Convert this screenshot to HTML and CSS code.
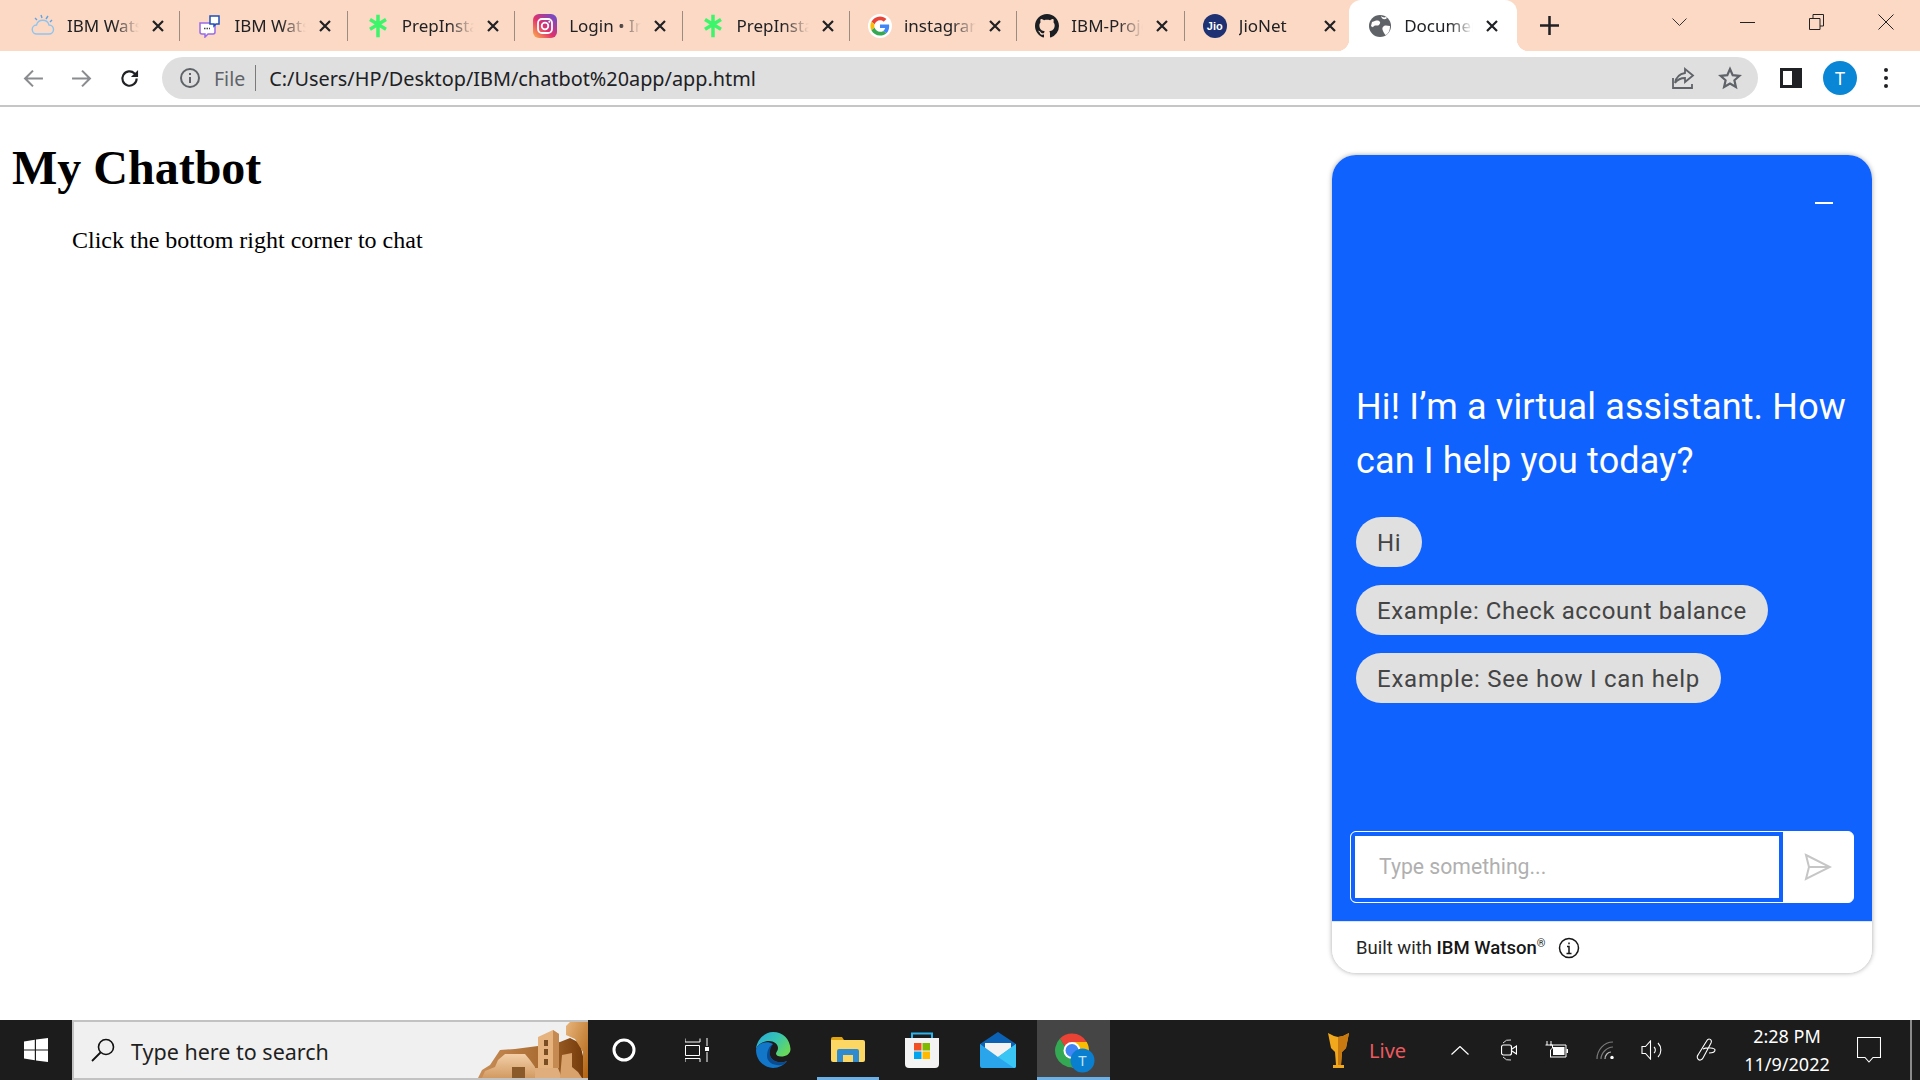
FILE: index.html
```html
<!DOCTYPE html>
<html lang="en">
<head>
    <meta charset="UTF-8">
    <title>Document</title>
    <link rel="stylesheet" href="styles.css">
</head>
<body>
    <svg class="defs" width="0" height="0">
        <symbol id="x" viewBox="0 0 14 14"><path d="M2 2l10 10M12 2L2 12" fill="none" stroke="#202124" stroke-width="2.2"/></symbol>
        <symbol id="prep" viewBox="0 0 24 30"><path d="M12 1v28M2 7l20 12M22 7L2 19" fill="none" stroke="#3df56b" stroke-width="4.4"/></symbol>
    </svg>

    <div class="tabstrip">
        <div class="tab">
            <svg class="favicon" viewBox="0 0 24 24"><path d="M6 20a4.500 4.500 0 0 1-.5-9 6.500 6.500 0 0 1 12.500 0 4.500 4.500 0 0 1 0 9z" fill="none" stroke="#8fc4ee" stroke-width="1.400"/><path d="M10 1l1 3M4 4l2 2M17 2l-2 3M21 6l-2 2" stroke="#5ea4e8" stroke-width="1.400"/></svg>
            <span class="tab-title">IBM Watson</span>
            <svg class="tab-close"><use href="#x"/></svg>
        </div>
        <div class="tab-sep"></div>
        <div class="tab">
            <svg class="favicon" viewBox="0 0 24 24"><path d="M2 9h13a2 2 0 0 1 2 2v7a2 2 0 0 1-2 2h-5l-3 3v-3H4a2 2 0 0 1-2-2z" fill="#fff" stroke="#9a6be8" stroke-width="1.500"/><path d="M12 2h9v8h-3l-2 2v-2h-4z" fill="#fff" stroke="#1f4fb8" stroke-width="1.500"/><path d="M6 14.500h6" stroke="#444" stroke-width="1.400" stroke-dasharray="1.500 1"/></svg>
            <span class="tab-title">IBM Watson</span>
            <svg class="tab-close"><use href="#x"/></svg>
        </div>
        <div class="tab-sep"></div>
        <div class="tab">
            <svg class="favicon"><use href="#prep"/></svg>
            <span class="tab-title">PrepInsta</span>
            <svg class="tab-close"><use href="#x"/></svg>
        </div>
        <div class="tab-sep"></div>
        <div class="tab">
            <svg class="favicon" viewBox="0 0 24 24">
                <defs><linearGradient id="ig" x1="0" y1="1" x2="1" y2="0"><stop offset="0" stop-color="#fdb44b"/><stop offset=".45" stop-color="#e1306c"/><stop offset="1" stop-color="#5b51d8"/></linearGradient></defs>
                <rect width="24" height="24" rx="6" fill="url(#ig)"/><rect x="5" y="5" width="14" height="14" rx="4" fill="none" stroke="#fff" stroke-width="1.800"/><circle cx="12" cy="12" r="3.300" fill="none" stroke="#fff" stroke-width="1.800"/><circle cx="16.300" cy="7.700" r="1" fill="#fff"/>
            </svg>
            <span class="tab-title">Login • Instagram</span>
            <svg class="tab-close"><use href="#x"/></svg>
        </div>
        <div class="tab-sep"></div>
        <div class="tab">
            <svg class="favicon"><use href="#prep"/></svg>
            <span class="tab-title">PrepInsta</span>
            <svg class="tab-close"><use href="#x"/></svg>
        </div>
        <div class="tab-sep"></div>
        <div class="tab">
            <svg class="favicon" viewBox="-6 -6 60 60">
                <circle cx="24" cy="24" r="30" fill="#fff"/>
                <path fill="#EA4335" d="M24 9.500c3.540 0 6.710 1.220 9.210 3.600l6.850-6.850C35.900 2.380 30.470 0 24 0 14.620 0 6.510 5.380 2.560 13.220l7.980 6.190C12.430 13.720 17.740 9.500 24 9.500z"/>
                <path fill="#4285F4" d="M46.980 24.550c0-1.570-.15-3.090-.38-4.550H24v9.020h12.940c-.58 2.960-2.260 5.480-4.780 7.180l7.730 6c4.510-4.180 7.090-10.360 7.090-17.650z"/>
                <path fill="#FBBC05" d="M10.530 28.590c-.48-1.450-.76-2.990-.76-4.590s.27-3.140.76-4.590l-7.980-6.190C.92 16.460 0 20.120 0 24c0 3.880.92 7.540 2.560 10.780l7.970-6.190z"/>
                <path fill="#34A853" d="M24 48c6.480 0 11.930-2.130 15.890-5.810l-7.730-6c-2.150 1.450-4.920 2.300-8.160 2.300-6.260 0-11.570-4.220-13.470-9.910l-7.980 6.190C6.510 42.620 14.620 48 24 48z"/>
            </svg>
            <span class="tab-title">instagram</span>
            <svg class="tab-close"><use href="#x"/></svg>
        </div>
        <div class="tab-sep"></div>
        <div class="tab">
            <svg class="favicon" viewBox="0 0 16 16"><path fill="#1b1f23" d="M8 0C3.580 0 0 3.580 0 8c0 3.540 2.290 6.530 5.470 7.590.4.070.55-.17.55-.38 0-.19-.01-.82-.01-1.490-2.010.37-2.530-.49-2.690-.94-.09-.23-.48-.94-.82-1.130-.28-.15-.68-.52-.01-.53.63-.01 1.080.58 1.230.82.720 1.210 1.870.87 2.330.66.070-.52.280-.87.510-1.070-1.780-.2-3.640-.89-3.640-3.950 0-.87.310-1.590.820-2.150-.08-.2-.36-1.020.080-2.120 0 0 .67-.21 2.200.82.640-.18 1.320-.27 2-.27.680 0 1.360.090 2 .27 1.530-1.040 2.200-.82 2.200-.82.440 1.100.160 1.920.080 2.120.510.560.820 1.270.820 2.150 0 3.070-1.870 3.750-3.650 3.950.290.250.540.730.540 1.480 0 1.070-.01 1.930-.01 2.200 0 .21.150.46.550.38A8.013 8.013 0 0 0 16 8c0-4.420-3.580-8-8-8z"/></svg>
            <span class="tab-title">IBM-Project</span>
            <svg class="tab-close"><use href="#x"/></svg>
        </div>
        <div class="tab-sep"></div>
        <div class="tab tab-last">
            <span class="jio-icon">Jio</span>
            <span class="tab-title">JioNet</span>
            <svg class="tab-close"><use href="#x"/></svg>
        </div>
        <div class="tab tab-active">
            <svg class="favicon" viewBox="0 0 24 24"><circle cx="12" cy="12" r="11" fill="#5f6368"/><path d="M4 8c3-1 5-2 7-1s1 3 0 4-4 0-5 1-1 2-3 0zM22 12c-2 0-4-1-6 0s-2 3-1 5 2 4 3 4c3-2 4-5 4-9zM13 2c1 1 3 2 5 1l1 1c-2 2-5 2-6-2z" fill="#fff"/></svg>
            <span class="tab-title">Document</span>
            <svg class="tab-close"><use href="#x"/></svg>
        </div>
        <svg class="new-tab" viewBox="0 0 18 18"><path d="M9 0v18M0 9h18" stroke="#202124" stroke-width="2.400"/></svg>
        <div class="window-controls">
            <svg class="win-chevron" viewBox="0 0 15 8"><path d="M.5.5l7 7 7-7" fill="none" stroke="#333" stroke-width="1"/></svg>
            <svg class="win-min" viewBox="0 0 15 1"><path d="M0 .5h15" stroke="#222" stroke-width="1"/></svg>
            <svg class="win-restore" viewBox="0 0 15 16"><path d="M.5 4.500h10.500v11H.5zM4 4.500V.5h10.500V12H11" fill="none" stroke="#222" stroke-width="1"/></svg>
            <svg class="win-close" viewBox="0 0 16 16"><path d="M.5.5l15 15M15.500.5l-15 15" fill="none" stroke="#222" stroke-width="1"/></svg>
        </div>
    </div>

    <div class="toolbar">
        <svg class="nav-btn" viewBox="0 0 20 20"><path d="M19 10H2M9.500 2.500L2 10l7.500 7.500" fill="none" stroke="#8a8c8f" stroke-width="2"/></svg>
        <svg class="nav-btn" viewBox="0 0 20 20"><path d="M1 10h17M10.500 2.500L18 10l-7.500 7.500" fill="none" stroke="#8a8c8f" stroke-width="2"/></svg>
        <svg class="nav-btn" viewBox="0 0 22 22"><path d="M18.500 11a7.500 7.500 0 1 1-2.200-5.300L19 8.200" fill="none" stroke="#202124" stroke-width="2.200"/><path d="M20 2v7.500h-7.500z" fill="#202124"/></svg>
        <div class="address-bar">
            <svg class="info-icon" viewBox="0 0 22 22"><circle cx="11" cy="11" r="9" fill="none" stroke="#5f6368" stroke-width="2"/><path d="M11 10v6M11 6v2" stroke="#5f6368" stroke-width="2"/></svg>
            <span class="addr-file">File</span>
            <span class="addr-sep"></span>
            <span class="addr-url">C:/Users/HP/Desktop/IBM/chatbot%20app/app.html</span>
            <svg class="addr-share" viewBox="0 0 24 24"><path d="M2 12v10h19v-4" fill="none" stroke="#5f6368" stroke-width="1.800"/><path d="M14 3l8 6.500-8 6.500v-4c-4 0-7 1-10 5 1-6 4-9 10-10z" fill="none" stroke="#5f6368" stroke-width="1.800"/></svg>
            <svg class="addr-star" viewBox="0 0 24 24"><path d="M12 3l2.700 6.200 6.800.6-5.100 4.500 1.500 6.700-5.900-3.500L6.100 21l1.500-6.700L2.500 9.800l6.800-.6z" fill="none" stroke="#5f6368" stroke-width="2.200"/></svg>
        </div>
        <svg class="side-panel" viewBox="0 0 22 20"><path d="M0 0h22v20H0z" fill="#202124"/><path d="M3 3h9v14H3z" fill="#fff"/></svg>
        <div class="avatar">T</div>
        <div class="menu-dots"><i></i><i></i><i></i></div>
    </div>

    <div class="page">
        <h1>My Chatbot</h1>
        <p>Click the bottom right corner to chat</p>

        <div class="chat-panel">
            <div class="chat-blue">
                <div class="chat-header"><span class="chat-min"></span></div>
                <div class="chat-greeting">Hi! I’m a virtual assistant. How can I help you today?</div>
                <div class="chips">
                    <button class="chip">Hi</button>
                    <button class="chip">Example: Check account balance</button>
                    <button class="chip chip-wide">Example: See how I can help</button>
                </div>
                <div class="chat-input-row">
                    <div class="chat-input">Type something...</div>
                    <div class="chat-send">
                        <svg viewBox="0 0 28 28"><path d="M2 2l24 12L2 26l3-12zM5 14h21" fill="none" stroke="#c6c6c6" stroke-width="2"/></svg>
                    </div>
                </div>
            </div>
            <div class="chat-footer">
                <span>Built with <b>IBM Watson</b><sup>®</sup></span>
                <svg viewBox="0 0 22 22"><circle cx="11" cy="11" r="9.500" fill="none" stroke="#161616" stroke-width="1.500"/><path d="M8.500 16.500h5M11 16.500V9.500H9M11 5.500v1.800" fill="none" stroke="#161616" stroke-width="1.500"/></svg>
            </div>
        </div>
    </div>

    <div class="taskbar">
        <svg class="start" viewBox="0 0 24 24"><path d="M0 3.500l10.800-1.700v9.600H0zM12 1.600L24 0v11.400H12zM0 12.600h10.800v9.600L0 20.500zM12 12.600h12V24l-12-1.600z" fill="#fff"/></svg>
        <div class="search">
            <svg class="search-icon" viewBox="0 0 24 24"><circle cx="15" cy="9" r="7.500" fill="none" stroke="#111" stroke-width="1.600"/><path d="M9.500 14.500L1 23" stroke="#111" stroke-width="1.800"/></svg>
            <span>Type here to search</span>
            <svg class="search-art" viewBox="0 0 118 56">
                <defs>
                    <linearGradient id="rock" x1="0" y1="0" x2="1" y2="0"><stop offset="0" stop-color="#c98f58"/><stop offset=".6" stop-color="#a86a30"/><stop offset="1" stop-color="#6e3506"/></linearGradient>
                    <linearGradient id="cliff" x1="0" y1="0" x2="1" y2="1"><stop offset="0" stop-color="#e8b57c"/><stop offset="1" stop-color="#b0620f"/></linearGradient>
                    <linearGradient id="adobe" x1="0" y1="0" x2="0" y2="1"><stop offset="0" stop-color="#f3cfa8"/><stop offset="1" stop-color="#d29a62"/></linearGradient>
                </defs>
                <path d="M8 56l4-8 8-5 10-15 15-1 23-3 22-4 10-4 10 5 8 35z" fill="url(#rock)"/>
                <path d="M100 0h18v56h-5V30l-8-13-9-4v-9z" fill="url(#cliff)"/>
                <path d="M68 15l15-7 6 4v34H68z" fill="#e6b27e"/>
                <path d="M83 8l6 4v34h-6z" fill="#c48a52"/>
                <path d="M74 18h4v6h-4zM74 27h4v6h-4zM74 37h4v6h-4z" fill="#7b4d22"/>
                <path d="M12 56l3-7 10-4 3-7 7-6h20l5 6 5 7v11z" fill="url(#adobe)"/>
                <path d="M42 45h13v11H42z" fill="#8a5a2a"/>
                <path d="M65 46h23l4 10H65z" fill="#dfae7c"/>
                <path d="M92 33l10-2v14l6 5 4 6H90z" fill="#d9a16b"/>
            </svg>
        </div>
        <div class="tb-item tb-cortana">
            <svg class="ic-24" viewBox="0 0 24 24"><circle cx="12" cy="12" r="10" fill="none" stroke="#fff" stroke-width="3"/></svg>
        </div>
        <div class="tb-item tb-taskview">
            <svg class="ic-24" viewBox="0 0 24 24"><path d="M0 .5v3.500h15V.5M.5 7.500h14v10H.5zM0 24v-3.500h15V24M22 0v8M22 14v10" fill="none" stroke="#fff"/><path d="M20 9h4v4h-4z" fill="#fff"/></svg>
        </div>
        <div class="tb-item">
            <svg class="ic-36" viewBox="0 0 36 36">
                <defs><linearGradient id="edge" x1="0" y1="0" x2="1" y2=".6"><stop offset="0" stop-color="#2aa6dc"/><stop offset=".55" stop-color="#35c5b4"/><stop offset="1" stop-color="#66d85c"/></linearGradient></defs>
                <path d="M1 17C2 7 10 0 18 0c10 0 17 7 17.500 17 0 5-4.500 7.500-9.500 7.500-3 0-5-1-5-3 0-1.500 2-2.500 2-5.500 0-4-4-7-9-7-6 0-11 3-13 8z" fill="url(#edge)"/>
                <path d="M1 18c0 10 8 18 17 18 6 0 11-3 14-7-4 2-10 2-14-1-5-4-5-12 0-16C12 8 2 11 1 18z" fill="#1277c9"/>
                <path d="M12 24c0 7 8 10 14 9 3-.5 5-2 6-4-4 2-11 2-15-2-3-3-3-10 1-15-4 2-6 7-6 12z" fill="#0c4a8e"/>
            </svg>
        </div>
        <div class="tb-item tb-open">
            <svg class="ic-folder" viewBox="0 0 34 26"><path d="M0 3a2 2 0 0 1 2-2h9l2 3h-13z" fill="#e0a40f"/><path d="M0 4h32a2 2 0 0 1 2 2v18a2 2 0 0 1-2 2H2a2 2 0 0 1-2-2z" fill="#fdd764"/><path d="M6 26V15a2 2 0 0 1 2-2h18a2 2 0 0 1 2 2v11h-6v-7H12v7z" fill="#2f8ad0"/></svg>
        </div>
        <div class="tb-item">
            <svg class="ic-36" viewBox="0 0 36 36">
                <path d="M8 7V1.500h20V7" fill="none" stroke="#2bb5ef" stroke-width="2"/>
                <path d="M1 6h34v26a4 4 0 0 1-4 4H5a4 4 0 0 1-4-4z" fill="#f3f3f3"/>
                <path d="M10 11h7.500v7.500H10z" fill="#f25022"/><path d="M18.500 11H26v7.500h-7.500z" fill="#7fba00"/><path d="M10 19.500h7.500V27H10z" fill="#00a4ef"/><path d="M18.500 19.500H26V27h-7.500z" fill="#ffb900"/>
            </svg>
        </div>
        <div class="tb-item tb-mail">
            <svg class="ic-36" viewBox="0 0 36 36">
                <path d="M0 12L18 0l18 12v22H0z" fill="#0b62b5"/>
                <path d="M5 11h26v8L18 26 5 19z" fill="#f2f2f2"/>
                <path d="M0 12l18 13 18-13v22a2 2 0 0 1-2 2H2a2 2 0 0 1-2-2z" fill="#2aa4ea"/>
                <path d="M36 12v22a2 2 0 0 1-2 2L18 25z" fill="#3ac6f5"/>
            </svg>
        </div>
        <div class="tb-item tb-active">
            <svg class="ic-chrome" viewBox="0 0 42 48">
                <path d="M18 8.500A17 17 0 0 1 32.700 17H18l-7.400 4.300L6 13.500A17 17 0 0 1 18 8.500z" fill="#ea4335"/>
                <path d="M32.700 17A17 17 0 0 1 18 42.500L26 29l-8-12z" fill="#fbbc05"/>
                <path d="M6 13.500A17 17 0 0 0 18 42.500L25 30l-14.400-8.700z" fill="#34a853"/>
                <circle cx="18" cy="25.500" r="8.500" fill="#fff"/><circle cx="18" cy="25.500" r="6.500" fill="#4285f4"/>
                <circle cx="28.500" cy="35.500" r="12" fill="#0a7fd0"/>
                <text x="28.500" y="41" class="chrome-t">T</text>
            </svg>
        </div>
        <div class="tray">
            <svg class="tray-torch" viewBox="0 0 21 36"><path d="M0 1l6 3 4 1 5-1 6-3-3 15-4 4-1 13h3v3H5v-3h3L7 20l-4-4z" fill="#f2a81d"/><path d="M10 5l5-1 6-3-3 15-4 4-1 13h-3z" fill="#c87a10"/></svg>
            <span class="tray-live">Live</span>
            <svg class="tray-chevron" viewBox="0 0 18 9"><path d="M.5 8.500l8.500-8 8.500 8" fill="none" stroke="#fff" stroke-width="1.200"/></svg>
            <svg class="tray-meet" viewBox="0 0 16 22"><path d="M2 4a8 8 0 0 1 8-3M2 18a8 8 0 0 0 8 3" fill="none" stroke="#ddd"/><rect x=".5" y="6" width="10" height="10" rx="2" fill="none" stroke="#fff" stroke-width="1.200"/><path d="M11 10l4.500-3v8L11 12" fill="none" stroke="#fff" stroke-width="1.200"/></svg>
            <svg class="tray-battery" viewBox="0 0 24 18"><path d="M3 0v4M7 0v4M1.500 4h7v3l-2 2v7" fill="none" stroke="#fff"/><path d="M6 4h16v12H6" fill="none" stroke="#fff"/><path d="M9 6h11.500v8H9z" fill="#fff"/><path d="M22.500 8H24v4h-1.500z" fill="#fff"/></svg>
            <svg class="tray-wifi" viewBox="0 0 18 18"><path d="M1 18C1 9 8 1 17 1M5 18c0-6 6-12 12-12" fill="none" stroke="#7b7b7b" stroke-width="1.200"/><path d="M9 18c0-4 3-7 6-7" fill="none" stroke="#b8b8b8" stroke-width="1.200"/><circle cx="16" cy="16.500" r="1.700" fill="#fff"/></svg>
            <svg class="tray-volume" viewBox="0 0 22 20"><path d="M1 6.500h3.500L9.500 1v18l-5-5.500H1z" fill="none" stroke="#fff" stroke-width="1.100"/><path d="M13 7a4 4 0 0 1 0 6M17 3a10 10 0 0 1 0 14" fill="none" stroke="#fff" stroke-width="1.100"/></svg>
            <svg class="tray-pen" viewBox="0 0 20 24"><path d="M13 1c2 0 3 2 2 4L7 20c-1 2-4 3-5 1-1-1-1-3 0-4l8-13c1-2 2-3 3-3zM7 11c4-2 12-1 12 1s-3 3-6 3" fill="none" stroke="#fff" stroke-width="1.100"/></svg>
            <div class="clock"><span>2:28 PM</span><span>11/9/2022</span></div>
            <svg class="tray-notify" viewBox="0 0 24 26"><path d="M.5.5h23v20H16l-4 4.500L8 20.500H.5z" fill="none" stroke="#fff" stroke-width="1.100"/></svg>
            <span class="show-desktop"></span>
        </div>
    </div>
</body>
</html>
```

FILE: styles.css
```css
* {
    box-sizing: border-box;
}

body {
    display: flex;
    flex-direction: column;
    height: 100vh;
    margin: 0;
    overflow: hidden;
    background: #fff;
}

.defs {
    position: absolute;
}

/* browser tabs */
.tabstrip {
    display: flex;
    align-items: center;
    height: 51px;
    padding-left: 13px;
    background: #fcd9c5;
    font-family: "Noto Sans", sans-serif;
    font-size: 17px;
    color: #202124;
}

.tab {
    display: flex;
    align-items: center;
    flex: none;
    width: 166.400px;
    height: 51px;
    padding-left: 18px;
}

.tab-last {
    width: 164.400px;
}

.tab-sep {
    flex: none;
    width: 1px;
    height: 30px;
    background: #9c8b80;
}

.favicon {
    flex: none;
    width: 24px;
    height: 24px;
}

.jio-icon {
    flex: none;
    width: 24px;
    height: 24px;
    border-radius: 50%;
    background: #1f3173;
    color: #fff;
    font-family: "Liberation Sans", sans-serif;
    font-size: 11px;
    font-weight: bold;
    line-height: 24px;
    text-align: center;
}

.tab-title {
    flex: none;
    width: 72px;
    margin-left: 12px;
    overflow: hidden;
    white-space: nowrap;
    -webkit-mask-image: linear-gradient(to right, #000 65%, transparent 100%);
    mask-image: linear-gradient(to right, #000 65%, transparent 100%);
}

.tab-close {
    flex: none;
    width: 14px;
    height: 14px;
    margin-left: 12px;
}

.tab-active {
    position: relative;
    width: 168px;
    padding-left: 19px;
    background: #fff;
    border-radius: 12px 12px 0 0;
}

.tab-active .tab-title {
    width: 69px;
}

.tab-active::before,
.tab-active::after {
    content: "";
    position: absolute;
    bottom: 0;
    width: 12px;
    height: 12px;
}

.tab-active::before {
    left: -12px;
    background: radial-gradient(circle at 0 0, #fcd9c5 12px, #fff 12.500px);
}

.tab-active::after {
    right: -12px;
    background: radial-gradient(circle at 100% 0, #fcd9c5 12px, #fff 12.500px);
}

.new-tab {
    flex: none;
    width: 19px;
    height: 19px;
    margin-left: 23px;
}

.window-controls {
    display: flex;
    align-self: flex-start;
    align-items: center;
    height: 44px;
    margin-left: 113px;
}

.win-chevron {
    width: 15px;
    height: 8px;
}

.win-min {
    width: 15px;
    height: 1px;
    margin-left: 53px;
}

.win-restore {
    width: 15px;
    height: 16px;
    margin-left: 54px;
}

.win-close {
    width: 16px;
    height: 16px;
    margin-left: 54px;
}

/* address bar */
.toolbar {
    display: flex;
    align-items: center;
    height: 56px;
    padding-left: 23px;
    background: #fff;
    border-bottom: 2px solid #c6c6c6;
}

.nav-btn {
    flex: none;
    width: 21px;
    height: 21px;
    margin-right: 27px;
}

.address-bar {
    display: flex;
    align-items: center;
    width: 1596px;
    height: 42px;
    margin-left: -5px;
    padding-left: 17px;
    border-radius: 21px;
    background: #dfdfdf;
    font-family: "Noto Sans", sans-serif;
    font-size: 19.500px;
    color: #202124;
}

.info-icon {
    width: 22px;
    height: 22px;
}

.addr-file {
    margin-left: 13px;
    color: #5f6368;
}

.addr-sep {
    width: 1px;
    height: 26px;
    margin: 0 13px 0 10px;
    background: #7a7a7a;
}

.addr-url {
    width: 1403px;
    font-size: 19.850px;
    white-space: nowrap;
}

.addr-share {
    flex: none;
    width: 24px;
    height: 24px;
    margin-left: -1px;
}

.addr-star {
    flex: none;
    width: 24px;
    height: 24px;
    margin-left: 23px;
}

.side-panel {
    flex: none;
    width: 22px;
    height: 20px;
    margin-left: 22px;
}

.avatar {
    flex: none;
    width: 34px;
    height: 34px;
    margin-left: 21px;
    border-radius: 50%;
    background: #0a86d6;
    color: #fff;
    font-family: "Noto Sans", sans-serif;
    font-size: 18px;
    line-height: 34px;
    text-align: center;
}

.menu-dots {
    display: flex;
    flex-direction: column;
    gap: 4px;
    margin-left: 27px;
}

.menu-dots i {
    width: 4px;
    height: 4px;
    border-radius: 50%;
    background: #202124;
}

/* page content */
.page {
    position: relative;
    flex: 1;
    padding: 0 12px;
    font-family: "Liberation Serif", serif;
    color: #000;
}

.page h1 {
    margin: 33px 0 31px;
    font-size: 48px;
    line-height: 55px;
}

.page p {
    margin: 32px 60px;
    font-size: 24px;
    line-height: 27px;
}

/* chat widget */
.chat-panel {
    position: absolute;
    top: 48px;
    right: 48px;
    display: flex;
    flex-direction: column;
    width: 540px;
    height: 818px;
    border-radius: 24px;
    overflow: hidden;
    box-shadow: 0 0 5px rgba(0, 0, 0, 0.35);
    font-family: "Roboto", sans-serif;
}

.chat-blue {
    display: flex;
    flex: 1;
    flex-direction: column;
    padding: 0 18px 18px;
    background: #0f62fe;
}

.chat-header {
    display: flex;
    justify-content: flex-end;
    height: 225px;
    padding: 47px 21px 0 0;
}

.chat-min {
    width: 18px;
    height: 2px;
    background: #fff;
}

.chat-greeting {
    margin: 0 0 29px 6px;
    font-size: 36px;
    letter-spacing: 0.15px;
    line-height: 54px;
    color: #fff;
}

.chips {
    display: flex;
    flex-direction: column;
    align-items: flex-start;
    gap: 18px;
    margin-left: 6px;
}

.chip {
    height: 50px;
    padding: 2px 21px 0;
    border: none;
    border-radius: 25px;
    background: #e0e0e0;
    color: #444;
    font-family: inherit;
    font-size: 24px;
    letter-spacing: 0.6px;
}

.chip-wide {
    letter-spacing: 0.76px;
}

.chat-input-row {
    display: flex;
    height: 72px;
    margin-top: auto;
    border: 1px solid #fff;
    border-radius: 6px;
    overflow: hidden;
    background: #fff;
}

.chat-input {
    flex: 1;
    padding-left: 24px;
    border: 4px solid #0f62fe;
    border-radius: 4px 0 0 4px;
    background: #fff;
    color: #b0b0b0;
    font-size: 21.200px;
    line-height: 62px;
}

.chat-send {
    display: flex;
    align-items: center;
    justify-content: center;
    width: 70px;
}

.chat-send svg {
    width: 28px;
    height: 28px;
}

.chat-footer {
    display: flex;
    align-items: center;
    gap: 13px;
    height: 52px;
    padding-left: 24px;
    background: #fff;
    border-top: 1px solid #dde3f0;
    font-size: 18.500px;
    color: #262626;
}

.chat-footer b {
    font-weight: 500;
    color: #161616;
}

.chat-footer sup {
    font-size: 11px;
    line-height: 0;
}

.chat-footer svg {
    width: 22px;
    height: 22px;
}

/* windows taskbar */
.taskbar {
    display: flex;
    align-items: center;
    flex: none;
    height: 60px;
    background: #1c1c1c;
}

.start {
    flex: none;
    width: 24px;
    height: 24px;
    margin: 0 24px;
}

.search {
    display: flex;
    align-items: center;
    flex: none;
    width: 516px;
    height: 60px;
    padding-left: 17px;
    border: solid #c2c2c2;
    border-width: 2px 0 2px 2px;
    background: #f0f0f0;
    font-family: "Noto Sans", sans-serif;
    font-size: 21.500px;
    color: #1f1f1f;
    white-space: nowrap;
}

.search span {
    padding-top: 2px;
}

.search-icon {
    flex: none;
    width: 24px;
    height: 24px;
    margin-right: 16px;
}

.search-art {
    flex: none;
    width: 118px;
    height: 56px;
    margin-left: auto;
}

.tb-item {
    display: flex;
    align-items: center;
    justify-content: center;
    flex: none;
    width: 74px;
    height: 60px;
}

.tb-cortana {
    padding-right: 2px;
}

.tb-taskview {
    padding-right: 4px;
}

.ic-24 {
    width: 24px;
    height: 24px;
}

.ic-36 {
    width: 36px;
    height: 36px;
}

.ic-folder {
    width: 34px;
    height: 26px;
}

.ic-chrome {
    flex: none;
    width: 42px;
    height: 48px;
}

.chrome-t {
    fill: #bfe3fa;
    font-family: "Noto Sans", sans-serif;
    font-size: 15px;
    text-anchor: middle;
}

.tb-open {
    width: 62px;
    margin: 0 6px 0 7px;
    border-bottom: 3px solid #6cb0e6;
}

.tb-mail {
    margin-left: 2px;
}

.tb-active {
    width: 73px;
    margin-left: 2px;
    padding-left: 2px;
    background: #454545;
    border-bottom: 3px solid #6cb0e6;
}

.tray {
    display: flex;
    align-items: center;
    flex: 1;
    height: 60px;
    color: #fff;
    font-family: "Noto Sans", sans-serif;
}

.tray-torch {
    flex: none;
    width: 21px;
    height: 36px;
    margin-left: 218px;
}

.tray-live {
    width: 82px;
    margin-left: 20px;
    color: #ec5a5f;
    font-size: 20px;
}

.tray-chevron {
    flex: none;
    width: 18px;
    height: 9px;
}

.tray-meet {
    flex: none;
    width: 16px;
    height: 22px;
    margin-left: 32px;
}

.tray-battery {
    flex: none;
    width: 24px;
    height: 18px;
    margin-left: 27px;
}

.tray-wifi {
    flex: none;
    width: 18px;
    height: 18px;
    margin-left: 28px;
}

.tray-volume {
    flex: none;
    width: 22px;
    height: 20px;
    margin-left: 27px;
}

.tray-pen {
    flex: none;
    width: 20px;
    height: 24px;
    margin-left: 33px;
}

.clock {
    display: flex;
    flex-direction: column;
    align-items: center;
    gap: 6px;
    width: 120px;
    margin-left: 11px;
    font-size: 18px;
    line-height: 22px;
}

.tray-notify {
    flex: none;
    width: 24px;
    height: 26px;
    margin-left: 10px;
}

.show-desktop {
    width: 2px;
    height: 60px;
    margin-left: 29px;
    background: #8a8a8a;
}
```
